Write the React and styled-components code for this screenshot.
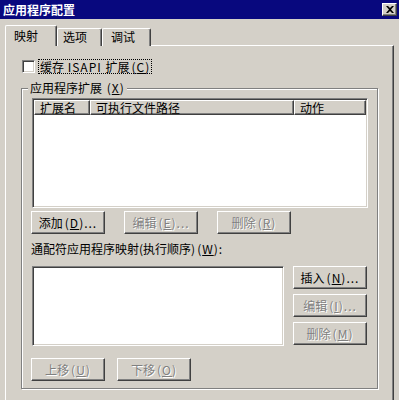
import styled, { createGlobalStyle } from "styled-components";

const Global = createGlobalStyle`
  html, body {
    margin: 0;
    padding: 0;
    background: #d4d0c8;
  }
  body {
    font-family: "Noto Sans CJK SC", "Liberation Sans", sans-serif;
    font-size: 12px;
    color: #000;
  }
`;

const Win = styled.div`
  width: 399px;
  height: 400px;
  background: #d4d0c8;
  overflow: hidden;
`;

const TitleBar = styled.div`
  height: 19px;
  background: #08087e;
  display: flex;
  align-items: center;
  justify-content: space-between;
  padding: 0 2px 0 3px;
  color: #fff;
  font-weight: bold;
  font-size: 12px;
  line-height: 19px;
`;

const CloseBtn = styled.div`
  width: 13px;
  height: 11px;
  background: #d4d0c8;
  border: 1px solid;
  border-color: #fff #404040 #404040 #fff;
  box-shadow: inset -1px -1px 0 #808080;
  display: flex;
  align-items: center;
  justify-content: center;
  svg {
    display: block;
  }
`;

const TabRow = styled.div`
  display: flex;
  align-items: flex-end;
  height: 21px;
  margin-top: 6px;
  padding-left: 5px;
`;

const Tab = styled.div`
  position: relative;
  z-index: ${(p) => (p.$active ? 2 : 0)};
  box-sizing: border-box;
  width: ${(p) => p.$w}px;
  height: ${(p) => (p.$active ? 21 : 18)}px;
  padding-left: ${(p) => p.$pl}px;
  background: #d4d0c8;
  border-top: 1px solid #fff;
  border-left: 1px solid #fff;
  border-right: 1px solid #404040;
  box-shadow: inset -1px 0 0 #808080;
  border-radius: 2px 2px 0 0;
  line-height: ${(p) => (p.$active ? 19 : 16)}px;
`;

const Panel = styled.div`
  box-sizing: border-box;
  margin: -1px 0 0 5px;
  width: 389px;
  height: 370px;
  border-top: 1px solid #fff;
  border-left: 1px solid #fff;
  border-right: 1px solid #404040;
  box-shadow: inset -1px 0 0 #808080;
  padding: 13px 0 0 15px;
`;

const CheckRow = styled.label`
  display: flex;
  align-items: center;
  gap: 3px;
  height: 14px;
  margin-left: 1px;
`;

const CheckBox = styled.span`
  box-sizing: border-box;
  width: 13px;
  height: 13px;
  background: #fff;
  border: 1px solid;
  border-color: #808080 #fff #fff #808080;
  box-shadow: inset 1px 1px 0 #404040, inset -1px -1px 0 #d4d0c8;
`;

const FocusText = styled.span`
  border: 1px dotted #000;
  padding: 0 1px;
  line-height: 13px;
`;

const Latin = styled.span`
  letter-spacing: 1px;
  margin: 0 1px;
`;

const Key = styled.span`
  letter-spacing: 1px;
  margin-left: 2px;
`;

const Group = styled.div`
  box-sizing: border-box;
  width: 357px;
  margin-top: 15px;
  border: 1px solid #808080;
  box-shadow: inset 1px 1px 0 #fff, 1px 1px 0 #fff;
  padding: 0 8px 7px 9px;
`;

const GroupTitle = styled.div`
  width: fit-content;
  margin: -8px 0 0 -3px;
  padding: 0 2px;
  background: #d4d0c8;
  line-height: 14px;
  height: 14px;
`;

const Sunken = styled.div`
  box-sizing: border-box;
  width: ${(p) => p.$w}px;
  height: ${(p) => p.$h}px;
  margin-left: 1px;
  background: #fff;
  border: 1px solid;
  border-color: #808080 #fff #fff #808080;
  box-shadow: inset 1px 1px 0 #404040, inset -1px -1px 0 #d4d0c8;
  padding: 1px;
`;

const ListView = styled(Sunken)`
  margin-top: 3px;
`;

const Header = styled.div`
  display: flex;
  height: 15px;
`;

const HeadCell = styled.div`
  box-sizing: border-box;
  width: ${(p) => (p.$w ? `${p.$w}px` : "auto")};
  flex: ${(p) => (p.$w ? "none" : 1)};
  background: #d4d0c8;
  border-top: 1px solid #fff;
  border-left: 1px solid #fff;
  border-right: 1px solid #404040;
  border-bottom: 1px solid #404040;
  box-shadow: inset -1px -1px 0 #808080;
  padding-left: 5px;
  line-height: 13px;
`;

const BtnRow = styled.div`
  display: flex;
  gap: ${(p) => p.$gap}px;
  margin-top: ${(p) => p.$mt}px;
`;

const Btn = styled.button`
  box-sizing: border-box;
  width: 74px;
  height: 23px;
  margin: 0;
  padding: 0;
  font: inherit;
  color: #000;
  background: #d4d0c8;
  border: 1px solid;
  border-color: #fff #404040 #404040 #fff;
  border-radius: 0;
  box-shadow: inset -1px -1px 0 #808080;
  line-height: 20px;
  white-space: nowrap;
  &:disabled {
    color: #808080;
    text-shadow: 1px 1px 0 #fff;
  }
`;

const Caption = styled.div`
  margin-top: 8px;
  line-height: 14px;
`;

const MapRow = styled.div`
  display: flex;
  gap: 9px;
  margin-top: 10px;
`;

const SideButtons = styled.div`
  display: flex;
  flex-direction: column;
  gap: 5px;
`;

const K = ({ c, dots }) => (
  <Key>
    (<u>{c}</u>){dots ? "..." : ""}
  </Key>
);

export default function App() {
  return (
    <>
      <Global />
      <Win>
        <TitleBar>
          <span>应用程序配置</span>
          <CloseBtn>
            <svg width="8" height="7" viewBox="0 0 8 7">
              <path
                d="M0 0h2l2 2 2-2h2L5 3.5 8 7H6L4 5 2 7H0l3-3.5z"
                fill="#000"
              />
            </svg>
          </CloseBtn>
        </TitleBar>

        <TabRow>
          <Tab $active $w={52} $pl={8}>映射</Tab>
          <Tab $w={45} $pl={5}>选项</Tab>
          <Tab $w={49} $pl={8}>调试</Tab>
        </TabRow>

        <Panel>
          <CheckRow>
            <CheckBox />
            <FocusText>
              缓存 <Latin>ISAPI</Latin> 扩展
              <K c="C" />
            </FocusText>
          </CheckRow>

          <Group>
            <GroupTitle>
              应用程序扩展 <K c="X" />
            </GroupTitle>
            <ListView $w={336} $h={110}>
              <Header>
                <HeadCell $w={56}>扩展名</HeadCell>
                <HeadCell $w={204}>可执行文件路径</HeadCell>
                <HeadCell>动作</HeadCell>
              </Header>
            </ListView>

            <BtnRow $gap={19} $mt={3}>
              <Btn>
                添加<K c="D" dots />
              </Btn>
              <Btn disabled>
                编辑<K c="E" dots />
              </Btn>
              <Btn disabled>
                删除<K c="R" />
              </Btn>
            </BtnRow>

            <Caption>
              通配符应用程序映射(执行顺序)<K c="W" />:
            </Caption>

            <MapRow>
              <Sunken $w={252} $h={80} />
              <SideButtons>
                <Btn>
                  插入<K c="N" dots />
                </Btn>
                <Btn disabled>
                  编辑<K c="I" dots />
                </Btn>
                <Btn disabled>
                  删除<K c="M" />
                </Btn>
              </SideButtons>
            </MapRow>

            <BtnRow $gap={12} $mt={12}>
              <Btn disabled>
                上移<K c="U" />
              </Btn>
              <Btn disabled>
                下移<K c="O" />
              </Btn>
            </BtnRow>
          </Group>
        </Panel>
      </Win>
    </>
  );
}
